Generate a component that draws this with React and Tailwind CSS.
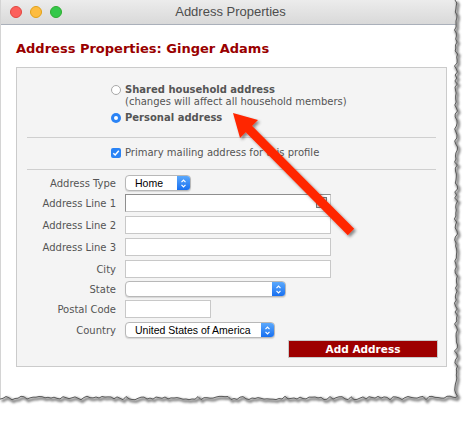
import React from 'react';

// jagged "torn paper" edge along the right and bottom of the window
function tornPoints() {
  const rnd = (i) => {
    const s = Math.sin(i * 12.9898 + 78.233) * 43758.5453;
    return s - Math.floor(s);
  };
  const pts = [];
  let k = 0;
  for (let y = 0; y <= 396; y += 3) {
    pts.push([456 + (rnd(k++) - 0.5) * 3.2, y]);
  }
  for (let x = 456; x >= 0; x -= 3) {
    pts.push([x, 398 + (rnd(k++) - 0.5) * 3.6]);
  }
  return pts;
}

function TornEdge() {
  const pts = tornPoints();
  const line = pts.map((p, i) => `${i ? 'L' : 'M'}${p[0].toFixed(1)} ${p[1].toFixed(1)}`).join(' ');
  const fill = `${line} L0 431 L466 431 L466 0 Z`;
  return (
    <svg className="pointer-events-none absolute inset-0" width="466" height="431">
      <defs>
        <filter id="tornBlur" x="-5%" y="-5%" width="110%" height="110%">
          <feGaussianBlur stdDeviation="1.3" />
        </filter>
      </defs>
      <path d={fill} fill="#ffffff" />
      <path d={line} transform="translate(1.5 1.8)" fill="none" stroke="#8a8a8a" strokeWidth="3" filter="url(#tornBlur)" />
      <path d={line} fill="none" stroke="#5a5a5a" strokeWidth="1" />
    </svg>
  );
}

function Arrow() {
  return (
    <svg className="pointer-events-none absolute inset-0" width="466" height="431">
      <defs>
        <filter id="arrowShadow" x="-20%" y="-20%" width="140%" height="140%">
          <feDropShadow dx="2" dy="2" stdDeviation="1.5" floodColor="#000" floodOpacity="0.45" />
        </filter>
      </defs>
      <g filter="url(#arrowShadow)" fill="#ff2600">
        <polygon points="245.3,131.8 251.7,125.4 354.2,228.8 347.8,235.2" />
        <polygon points="233,113 258,120 240,138" />
      </g>
    </svg>
  );
}

function Stepper() {
  return (
    <span className="flex w-[13px] items-center justify-center rounded-r-[3px] bg-gradient-to-b from-[#5aa8fc] to-[#166ff0]">
      <svg width="7" height="11" viewBox="0 0 7 11">
        <path d="M1.5 4.2 L3.5 2.2 L5.5 4.2" fill="none" stroke="#fff" strokeWidth="1.2" />
        <path d="M1.5 6.8 L3.5 8.8 L5.5 6.8" fill="none" stroke="#fff" strokeWidth="1.2" />
      </svg>
    </span>
  );
}

function Select({ className, value }) {
  return (
    <div className={`flex h-[16px] items-stretch rounded-[4px] border border-[#b8b8b8] bg-white shadow-[0_1px_1px_rgba(0,0,0,0.12)] ${className}`}>
      <span className="flex-1 pl-[9px] font-['Liberation_Sans',sans-serif] text-[10.5px] leading-[14px] text-black">{value}</span>
      <Stepper />
    </div>
  );
}

function Row({ label, className, children }) {
  return (
    <div className={`flex items-center ${className}`}>
      <div className="w-[100px] pr-[1px] text-right text-[10px] leading-[13px] text-[#555]">{label}</div>
      <div className="ml-[8px] flex">{children}</div>
    </div>
  );
}

const inputCls = 'h-[18px] border border-[#c8c8c8] bg-white';

export default function App() {
  return (
    <div className="relative h-[431px] w-[466px] overflow-hidden bg-white font-['DejaVu_Sans',sans-serif]">
      <div className="h-[400px] w-[458px] border-l border-[#d4d4d4] bg-white">
        {/* title bar */}
        <div className="relative flex h-[25px] items-center justify-center border-b border-[#aab0ba] bg-gradient-to-b from-[#ececec] to-[#d9d9d9]">
          <div className="absolute left-[9px] top-[6px] flex gap-[8px]">
            <span className="h-[12px] w-[12px] rounded-full border border-[#e2463f] bg-[#fc605c]" />
            <span className="h-[12px] w-[12px] rounded-full border border-[#e1a116] bg-[#fdbc40]" />
            <span className="h-[12px] w-[12px] rounded-full border border-[#2dac2f] bg-[#34c84a]" />
          </div>
          <span className="ml-[2px] font-['Liberation_Sans',sans-serif] text-[13px] text-[#4d4d4d]">Address Properties</span>
        </div>

        <div className="pl-[15px]">
          <h1 className="mt-[15px] text-[13px] font-bold leading-[17px] text-[#990000]">
            Address Properties: Ginger Adams
          </h1>

          <div className="mt-[10px] h-[300px] w-[431px] border border-[#cbcbcb] bg-[#f4f4f4] px-[10px]">
            {/* address kind */}
            <div className="pl-[84px] pt-[16px] text-[10px] leading-[12px] text-[#555]">
              <div className="flex">
                <span className="mt-[1px] h-[10px] w-[10px] rounded-full border border-[#a8a8a8] bg-white" />
                <div className="ml-[4px]">
                  <div className="font-bold">Shared household address</div>
                  <div>(changes will affect all household members)</div>
                </div>
              </div>
              <div className="mt-[4px] flex items-center">
                <span className="flex h-[10px] w-[10px] items-center justify-center rounded-full bg-[#2a83f5]">
                  <span className="h-[4px] w-[4px] rounded-full bg-white" />
                </span>
                <span className="ml-[4px] font-bold">Personal address</span>
              </div>
            </div>

            <div className="mt-[13px] border-t border-[#cfcfcf]" />

            <div className="flex h-[31px] items-center pb-[2px] pl-[84px] text-[10px] text-[#555]">
              <span className="flex h-[10px] w-[10px] items-center justify-center rounded-[2px] bg-[#2a83f5]">
                <svg width="8" height="8" viewBox="0 0 8 8">
                  <path d="M1.3 4.2 L3.2 6 L6.8 1.8" fill="none" stroke="#fff" strokeWidth="1.5" />
                </svg>
              </span>
              <span className="ml-[4px]">Primary mailing address for this profile</span>
            </div>

            <div className="border-t border-[#cfcfcf]" />

            {/* form */}
            <div className="-mx-[10px] pt-[5px]">
              <Row label="Address Type">
                <Select className="w-[66px]" value="Home" />
              </Row>
              <Row label="Address Line 1" className="mt-[3px]">
                <div className="relative h-[18px] w-[206px] border border-[#c8c8c8] border-l-[#8e8e8e] border-t-[#8e8e8e] bg-white">
                  <span className="absolute right-[3px] top-[2px] h-[11px] w-[11px] border border-[#7a7a7a] bg-[#d8d8d8]" />
                </div>
              </Row>
              <Row label="Address Line 2" className="mt-[4px]">
                <div className={`${inputCls} w-[206px]`} />
              </Row>
              <Row label="Address Line 3" className="mt-[4px]">
                <div className={`${inputCls} w-[206px]`} />
              </Row>
              <Row label="City" className="mt-[4px]">
                <div className={`${inputCls} w-[206px]`} />
              </Row>
              <Row label="State" className="mt-[3px]">
                <Select className="w-[161px]" value="" />
              </Row>
              <Row label="Postal Code" className="mt-[3px]">
                <div className={`${inputCls} w-[86px]`} />
              </Row>
              <Row label="Country" className="mt-[4px]">
                <Select className="w-[150px]" value="United States of America" />
              </Row>
              <div className="mt-[2px] flex justify-end pr-[8px]">
                <button className="h-[18px] w-[150px] border border-[#c9c9c9] bg-[#9e0000] text-[10.5px] font-bold leading-[16px] text-white">
                  Add Address
                </button>
              </div>
            </div>
          </div>
        </div>
      </div>

      <Arrow />
      <TornEdge />
    </div>
  );
}
